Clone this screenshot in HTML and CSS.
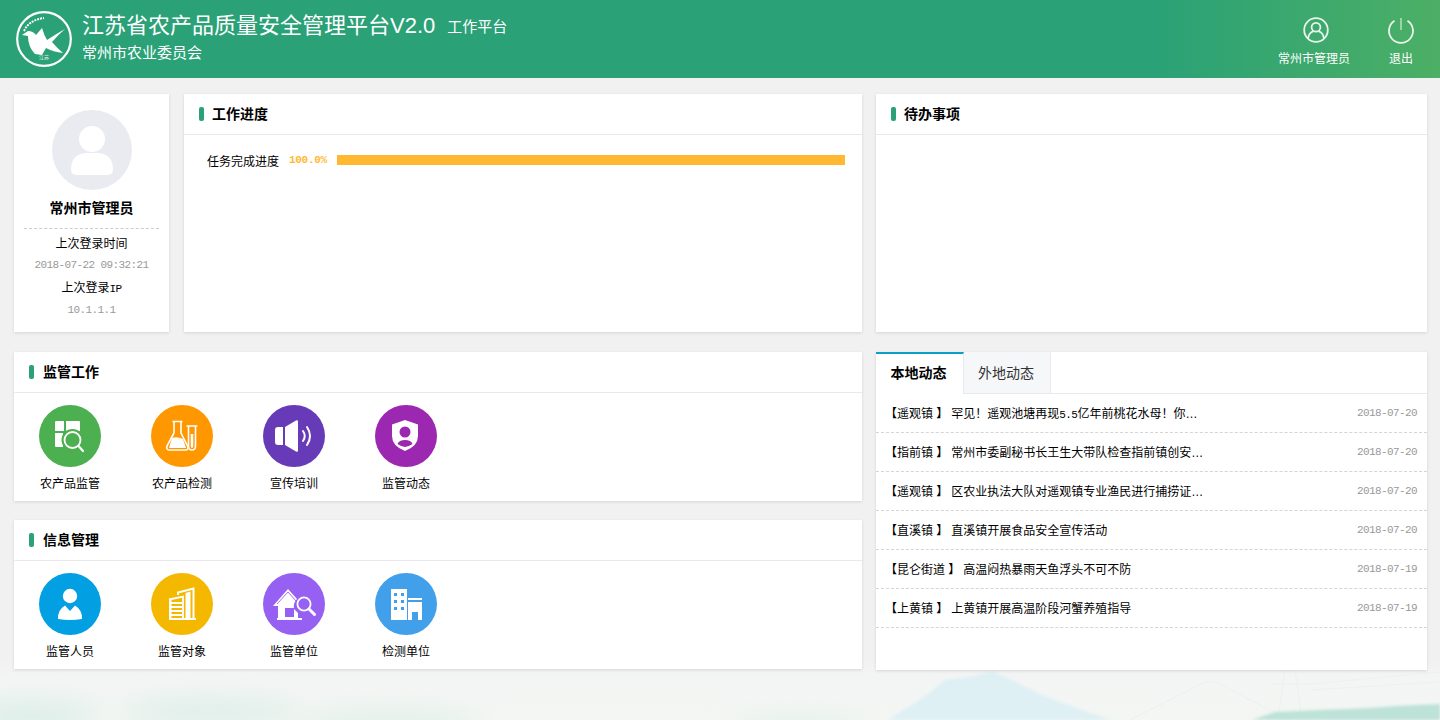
FILE: index.html
```html
<!DOCTYPE html>
<html lang="zh-CN">
<head>
    <meta charset="UTF-8">
    <meta name="viewport" content="width=device-width, initial-scale=1.0">
    <title>江苏省农产品质量安全管理平台</title>
    <link rel="stylesheet" href="styles.css">
</head>
<body>
    <!-- faint landscape behind the page -->
    <svg class="scenery" viewBox="0 0 1440 60" preserveAspectRatio="none" aria-hidden="true">
        <defs>
            <filter id="mist" x="-50%" y="-300%" width="200%" height="700%"><feGaussianBlur stdDeviation="14"></feGaussianBlur></filter>
            <filter id="soft" x="-10%" y="-30%" width="120%" height="160%"><feGaussianBlur stdDeviation="1.5"></feGaussianBlur></filter>
            <linearGradient id="fade" x1="0" y1="0" x2="0" y2="1">
                <stop offset="0" stop-color="#f1f1f1"></stop>
                <stop offset="0.3" stop-color="#f3f5f4"></stop>
                <stop offset="1" stop-color="#f3f6f3"></stop>
            </linearGradient>
        </defs>
        <rect width="1440" height="60" fill="url(#fade)"></rect>
        <g filter="url(#mist)" fill="#d6ebe4">
            <ellipse cx="30" cy="56" rx="70" ry="12"></ellipse>
            <ellipse cx="210" cy="52" rx="90" ry="10"></ellipse>
            <ellipse cx="390" cy="64" rx="90" ry="8"></ellipse>
            <ellipse cx="800" cy="68" rx="70" ry="6"></ellipse>
        </g>
        <path filter="url(#soft)" d="M888 60 L925 36 L945 20 L975 16 L992 11 L1012 20 L1040 34 L1076 48 L1112 60 Z" fill="#def0f4"></path>
        <g fill="none" stroke="#e9f1f0" stroke-width="1">
            <path d="M1130 60 L1205 22 L1215 22 L1290 60"></path>
            <path d="M1285 10 L1278 60 M1295 10 L1302 60 M1272 24 H1310"></path>
            <path d="M1310 24 L1440 12 M1310 30 L1440 22"></path>
        </g>
        <path filter="url(#soft)" d="M1252 60 L1275 52 L1320 50 L1370 48 L1395 46 L1440 44 V60 Z" fill="#bde2d8"></path>
    </svg>

    <header class="topbar">
        <svg class="logo" viewBox="0 0 56 56">
            <circle cx="28" cy="28" r="26.8" fill="none" stroke="#fff" stroke-width="2.2"></circle>
            <path d="M6 24 L12 20 Q17 20 20 24 L26 17 Q28 24 31 29 Q40 23 49 18 Q42 24 36 31 Q41 37 47 42 Q37 41 30 37 L26 44 L19 43 Q12 36 12 25 Z" fill="#fff"></path>
            <path d="M8 20 Q13 9 28 7" fill="none" stroke="#fff" stroke-width="2" stroke-dasharray="2 1"></path>
            <text class="logo-text" x="28" y="48" text-anchor="middle">江苏</text>
        </svg>
        <div class="brand">
            <div class="brand-line">
                <span class="brand-name">江苏省农产品质量安全管理平台V2.0</span>
                <span class="brand-tag">工作平台</span>
            </div>
            <div class="brand-sub">常州市农业委员会</div>
        </div>
        <nav class="topnav">
            <a class="topnav-item topnav-user">
                <svg viewBox="0 0 26 26" class="topnav-icon">
                    <circle cx="13" cy="13" r="11.8"></circle>
                    <circle cx="13" cy="10.2" r="4.4"></circle>
                    <path d="M5 21.5 Q6 15.6 10.2 14.4 M21 21.5 Q20 15.6 15.8 14.4"></path>
                </svg>
                <span>常州市管理员</span>
            </a>
            <a class="topnav-item topnav-exit">
                <svg viewBox="0 0 26 26" class="topnav-icon">
                    <path d="M6.5 3.8 A12 12 0 1 0 19.5 3.8"></path>
                    <path class="power-bar" d="M13 1 V13"></path>
                </svg>
                <span>退出</span>
            </a>
        </nav>
    </header>

    <main class="main">
        <div class="row row-top">
            <div class="left left-top">
                <section class="card profile">
                    <svg class="avatar" viewBox="0 0 80 80">
                        <circle cx="40" cy="40" r="40" fill="#e9ebf1"></circle>
                        <circle cx="40" cy="29" r="13" fill="#fff"></circle>
                        <path d="M19 60 Q19 43 36 43 H44 Q61 43 61 60 Q61 65 55 65 H25 Q19 65 19 60 Z" fill="#fff"></path>
                    </svg>
                    <div class="profile-name">常州市管理员</div>
                    <div class="profile-line">上次登录时间</div>
                    <div class="profile-value">2018-07-22 09:32:21</div>
                    <div class="profile-line">上次登录<span class="mono">IP</span></div>
                    <div class="profile-value">10.1.1.1</div>
                </section>
                <section class="card progress-card">
                    <h2 class="card-head">工作进度</h2>
                    <div class="progress">
                        <span class="progress-label">任务完成进度</span>
                        <span class="progress-num">100.0%</span>
                        <div class="progress-track"><div class="progress-bar" style="width: 100%"></div></div>
                    </div>
                </section>
            </div>
            <section class="card right">
                <h2 class="card-head">待办事项</h2>
            </section>
        </div>

        <div class="row">
            <div class="left left-bottom">
                <section class="card module">
                    <h2 class="card-head">监管工作</h2>
                    <div class="tiles">
                        <a class="tile">
                            <svg class="tile-icon" viewBox="0 0 62 62">
                                <circle cx="31" cy="31" r="31" fill="#4caf50"></circle>
                                <path d="M16 17 Q16 16 17 16 H25 V26 H16 Z M27 16 H40 Q41 16 41 17 V26 H27 Z M16 28 H24 V42 H17 Q16 42 16 41 Z M26 28 H41 V42 H26 Z" fill="#fff"></path>
                                <circle cx="33.5" cy="35" r="11" fill="#4caf50"></circle>
                                <circle cx="33.5" cy="35" r="8" fill="none" stroke="#fff" stroke-width="1.8"></circle>
                                <path d="M39.5 41 L44 46" stroke="#fff" stroke-width="2.2" stroke-linecap="round"></path>
                            </svg>
                            <span>农产品监管</span>
                        </a>
                        <a class="tile">
                            <svg class="tile-icon" viewBox="0 0 62 62">
                                <circle cx="31" cy="31" r="31" fill="#ff9800"></circle>
                                <path d="M23 17 V28 L16 41 Q15 45 18 45 H35 Q37 45 37 42 L30 28 V17 M21.5 16.5 H31.5" fill="none" stroke="#fff" stroke-width="1.6"></path>
                                <path d="M21 33 Q26 31 32 34 L35 43 H18 Z" fill="#fff"></path>
                                <path d="M37.5 21 V41 Q37.5 45 41 45 Q44.5 45 44.5 41 V21 M35.5 21 H46.5" fill="#ff9800" stroke="#fff" stroke-width="1.6"></path>
                                <path d="M39.7 29 H42.3 V41 Q42.3 43 41 43 Q39.7 43 39.7 41 Z" fill="#fff"></path>
                            </svg>
                            <span>农产品检测</span>
                        </a>
                        <a class="tile">
                            <svg class="tile-icon" viewBox="0 0 62 62">
                                <circle cx="31" cy="31" r="31" fill="#673ab7"></circle>
                                <path d="M15 22 H20 V40 H15 Q12 40 12 37 V25 Q12 22 15 22 Z" fill="#fff"></path>
                                <path d="M22 22 L33 15.5 Q35 14.5 35 16.5 V45.5 Q35 47.5 33 46.5 L22 40 Z" fill="#fff"></path>
                                <path d="M40 26 Q43.5 31 40 36 M44 22 Q50 31 44 40" fill="none" stroke="#fff" stroke-width="2" stroke-linecap="round"></path>
                            </svg>
                            <span>宣传培训</span>
                        </a>
                        <a class="tile">
                            <svg class="tile-icon" viewBox="0 0 62 62">
                                <circle cx="31" cy="31" r="31" fill="#9c27b0"></circle>
                                <path d="M30 15 L43 19.5 V31 Q43 41 30 46 Q17 41 17 31 V19.5 Z" fill="#fff"></path>
                                <circle cx="30" cy="27" r="5.5" fill="#9c27b0"></circle>
                                <path d="M22.5 39 Q24 35 30 35 Q36 35 37.5 39 Q34 41.5 30 42 Q26 41.5 22.5 39 Z" fill="#9c27b0"></path>
                            </svg>
                            <span>监管动态</span>
                        </a>
                    </div>
                </section>
                <section class="card module">
                    <h2 class="card-head">信息管理</h2>
                    <div class="tiles">
                        <a class="tile">
                            <svg class="tile-icon" viewBox="0 0 62 62">
                                <circle cx="31" cy="31" r="31" fill="#039fe3"></circle>
                                <circle cx="31" cy="23" r="7.2" fill="#fff"></circle>
                                <path d="M19 46 Q18.5 37 26 32.5 L31 38 L36 32.5 Q43.5 37 43 46 Q31 48 19 46 Z" fill="#fff"></path>
                            </svg>
                            <span>监管人员</span>
                        </a>
                        <a class="tile">
                            <svg class="tile-icon" viewBox="0 0 62 62">
                                <circle cx="31" cy="31" r="31" fill="#f5b800"></circle>
                                <path d="M27 22 V19.5 L42.5 15.5 V46" fill="none" stroke="#fff" stroke-width="2"></path>
                                <path d="M34.5 20 L39.5 18.5 V46 H34.5 Z" fill="#fff"></path>
                                <path d="M18 26.5 L32 23.5 V46" fill="none" stroke="#fff" stroke-width="1.8"></path>
                                <path d="M19 29 H31 V31 H19 Z M19 33 H31 V35 H19 Z M19 37 H31 V39 H19 Z M19 41 H31 V43 H19 Z M18 27 H20.5 V46 H18 Z M18 45 H45 V47 H18 Z" fill="#fff"></path>
                            </svg>
                            <span>监管对象</span>
                        </a>
                        <a class="tile">
                            <svg class="tile-icon" viewBox="0 0 62 62">
                                <circle cx="31" cy="31" r="31" fill="#9661f2"></circle>
                                <path d="M10 33 L25 16 L34 26 Q30 30 31 36 L35 40 V45 H39 V47 H14 V45 H15 V33 Z" fill="#fff"></path>
                                <path d="M14 31 L25 19 L33 28" fill="none" stroke="#9661f2" stroke-width="0.9"></path>
                                <rect x="22" y="35" width="9" height="9" fill="#9661f2"></rect>
                                <circle cx="41" cy="31" r="6.6" fill="#9661f2" stroke="#fff" stroke-width="1.8"></circle>
                                <path d="M46 36 L51.5 41.5" stroke="#fff" stroke-width="3" stroke-linecap="round"></path>
                            </svg>
                            <span>监管单位</span>
                        </a>
                        <a class="tile">
                            <svg class="tile-icon" viewBox="0 0 62 62">
                                <circle cx="31" cy="31" r="31" fill="#42a0ea"></circle>
                                <path d="M16 16 H32 V47 H16 Z" fill="#fff"></path>
                                <path d="M19 20 H22 V23 H19 Z M26 20 H29 V23 H26 Z M19 27 H22 V30 H19 Z M26 27 H29 V30 H26 Z M19 34 H22 V37 H19 Z M26 34 H29 V37 H26 Z" fill="#42a0ea"></path>
                                <path d="M33 25 H47 V27 H33 Z M33 29 H47 V47 H43 V39 H37 V47 H33 Z" fill="#fff"></path>
                            </svg>
                            <span>检测单位</span>
                        </a>
                    </div>
                </section>
            </div>
            <section class="card right news">
                <div class="tabs">
                    <a class="tab tab-active">本地动态</a>
                    <a class="tab">外地动态</a>
                </div>
                <ul class="news-list">
                    <li class="news-item"><span class="news-town">【遥观镇 】</span><span class="news-title">罕见！遥观池塘再现<span class="mono">5.5</span>亿年前桃花水母！你知道它吗</span><span class="news-date">2018-07-20</span></li>
                    <li class="news-item"><span class="news-town">【指前镇 】</span><span class="news-title">常州市委副秘书长王生大带队检查指前镇创安工作情况</span><span class="news-date">2018-07-20</span></li>
                    <li class="news-item"><span class="news-town">【遥观镇 】</span><span class="news-title">区农业执法大队对遥观镇专业渔民进行捕捞证年审工作</span><span class="news-date">2018-07-20</span></li>
                    <li class="news-item"><span class="news-town">【直溪镇 】</span><span class="news-title">直溪镇开展食品安全宣传活动</span><span class="news-date">2018-07-20</span></li>
                    <li class="news-item"><span class="news-town">【昆仑街道 】</span><span class="news-title">高温闷热暴雨天鱼浮头不可不防</span><span class="news-date">2018-07-19</span></li>
                    <li class="news-item"><span class="news-town">【上黄镇 】</span><span class="news-title">上黄镇开展高温阶段河蟹养殖指导</span><span class="news-date">2018-07-19</span></li>
                </ul>
            </section>
        </div>
    </main>
</body>
</html>
```

FILE: styles.css
```css
* {
    box-sizing: border-box;
}
html, body {
    height: 100%;
}
body {
    margin: 0;
    padding: 0;
    position: relative;
    overflow: hidden;
    background-color: #f1f1f1;
    color: #000;
    font-family: "Liberation Sans", "Noto Sans CJK SC", sans-serif;
    font-size: 12px;
}
.scenery {
    position: absolute;
    left: 0;
    bottom: 0;
    width: 100%;
    height: 60px;
}
.mono {
    font-family: "Liberation Mono", monospace;
    font-size: 11px;
    letter-spacing: -0.6px;
}

/* top bar */
.topbar {
    position: relative;
    display: flex;
    align-items: center;
    height: 78px;
    padding-left: 16px;
    background: linear-gradient(90deg, #2aa177 0%, #2aa177 80%, #4caf65 100%);
    color: #fff;
}
.logo {
    width: 56px;
    height: 56px;
    margin-right: 10px;
}
.logo-text {
    font-size: 5px;
    fill: #fff;
}
.brand {
    margin-top: -3px;
}
.brand-line {
    display: flex;
    align-items: center;
    height: 28px;
}
.brand-name {
    font-size: 22px;
    line-height: 28px;
}
.brand-tag {
    margin-left: 12px;
    margin-top: -1px;
    font-size: 15px;
}
.brand-sub {
    margin-top: 3px;
    font-size: 15px;
    line-height: 20px;
}
.topnav {
    display: flex;
    margin-left: auto;
    height: 100%;
}
.topnav-item {
    display: flex;
    flex-direction: column;
    align-items: center;
    padding-top: 17px;
    line-height: 18px;
}
.topnav-user {
    width: 72px;
    margin-right: 38px;
}
.topnav-user .topnav-icon {
    margin-left: 3px;
}
.topnav-exit {
    width: 26px;
    margin-right: 26px;
}
.topnav-icon {
    width: 26px;
    height: 26px;
    margin-bottom: 7px;
    overflow: visible;
    fill: none;
    stroke: #fff;
    stroke-opacity: 0.88;
    stroke-width: 1.8;
}
.power-bar {
    stroke-opacity: 0.5;
}

/* layout */
.main {
    position: relative;
    padding: 16px 13px 0 14px;
}
.row {
    display: flex;
    gap: 14px;
}
.row-top {
    height: 238px;
    margin-bottom: 20px;
}
.left {
    width: 848px;
}
.right {
    width: 551px;
}
.left-top {
    display: flex;
    gap: 15px;
}
.left-bottom {
    display: flex;
    flex-direction: column;
    gap: 19px;
}
.card {
    background-color: #fff;
    box-shadow: 0 1px 3px rgba(0, 0, 0, 0.12);
}
.card-head {
    position: relative;
    height: 41px;
    margin: 0;
    padding-left: 28px;
    border-bottom: 1px solid #e8e8ee;
    font-size: 14px;
    font-weight: bold;
    line-height: 40px;
}
.card-head::before {
    content: "";
    position: absolute;
    left: 15px;
    top: 13px;
    width: 5px;
    height: 14px;
    border-radius: 2px;
    background-color: #2aa177;
}

/* profile */
.profile {
    display: flex;
    flex-direction: column;
    align-items: center;
    width: 155px;
    padding: 16px 10px 0;
}
.avatar {
    width: 80px;
    height: 80px;
}
.profile-name {
    align-self: stretch;
    height: 39px;
    margin-bottom: 5px;
    padding-top: 8px;
    border-bottom: 1px dashed #ccc;
    font-size: 14px;
    font-weight: bold;
    line-height: 20px;
    text-align: center;
}
.profile-line {
    line-height: 20px;
}
.profile-value {
    margin-top: 1px;
    margin-bottom: 3px;
    color: #999;
    font-family: "Liberation Mono", monospace;
    font-size: 11px;
    letter-spacing: -0.6px;
    line-height: 20px;
}

/* progress */
.progress-card {
    flex: 1;
}
.progress {
    display: flex;
    align-items: center;
    height: 20px;
    margin-top: 15px;
    padding: 0 17px 0 23px;
}
.progress-num {
    width: 48px;
    margin-left: 10px;
    color: #ffb931;
    font-family: "Liberation Mono", monospace;
    font-size: 11px;
    font-weight: bold;
    letter-spacing: -0.3px;
}
.progress-track {
    flex: 1;
    height: 10px;
    background-color: #eee;
}
.progress-bar {
    height: 100%;
    background-color: #ffb931;
}

/* icon tiles */
.module {
    height: 149px;
}
.module .card-head {
    padding-left: 29px;
}
.tiles {
    display: flex;
    padding-top: 12px;
}
.tile {
    display: flex;
    flex-direction: column;
    align-items: center;
    width: 112px;
    line-height: 18px;
}
.tile-icon {
    width: 62px;
    height: 62px;
    margin-bottom: 8px;
}

/* news */
.news {
    height: 318px;
}
.tabs {
    display: flex;
    height: 42px;
    border-bottom: 1px solid #e8e8ee;
}
.tab {
    width: 87px;
    height: 41px;
    padding-right: 2px;
    border-top: 2px solid transparent;
    border-right: 1px solid #e8e8ee;
    background-color: #f6f7f9;
    color: #333;
    font-size: 14px;
    line-height: 38px;
    text-align: center;
}
.tab-active {
    width: 88px;
    height: 42px;
    border-top-color: #0aa0c8;
    border-right: 1px solid #e8e8ee;
    background-color: #fff;
    color: #000;
    font-weight: bold;
}
.news-list {
    margin: 0;
    padding: 0;
    list-style: none;
}
.news-item {
    display: flex;
    align-items: center;
    height: 39px;
    padding: 0 10px 1px 9px;
    border-bottom: 1px dashed #d5d5d5;
}
.news-town {
    margin-right: 3px;
    white-space: pre;
}
.news-title {
    max-width: 256px;
    overflow: hidden;
    white-space: nowrap;
    text-overflow: ellipsis;
}
.news-date {
    margin-left: auto;
    color: #999;
    font-family: "Liberation Mono", monospace;
    font-size: 11px;
    letter-spacing: -0.6px;
}
```
